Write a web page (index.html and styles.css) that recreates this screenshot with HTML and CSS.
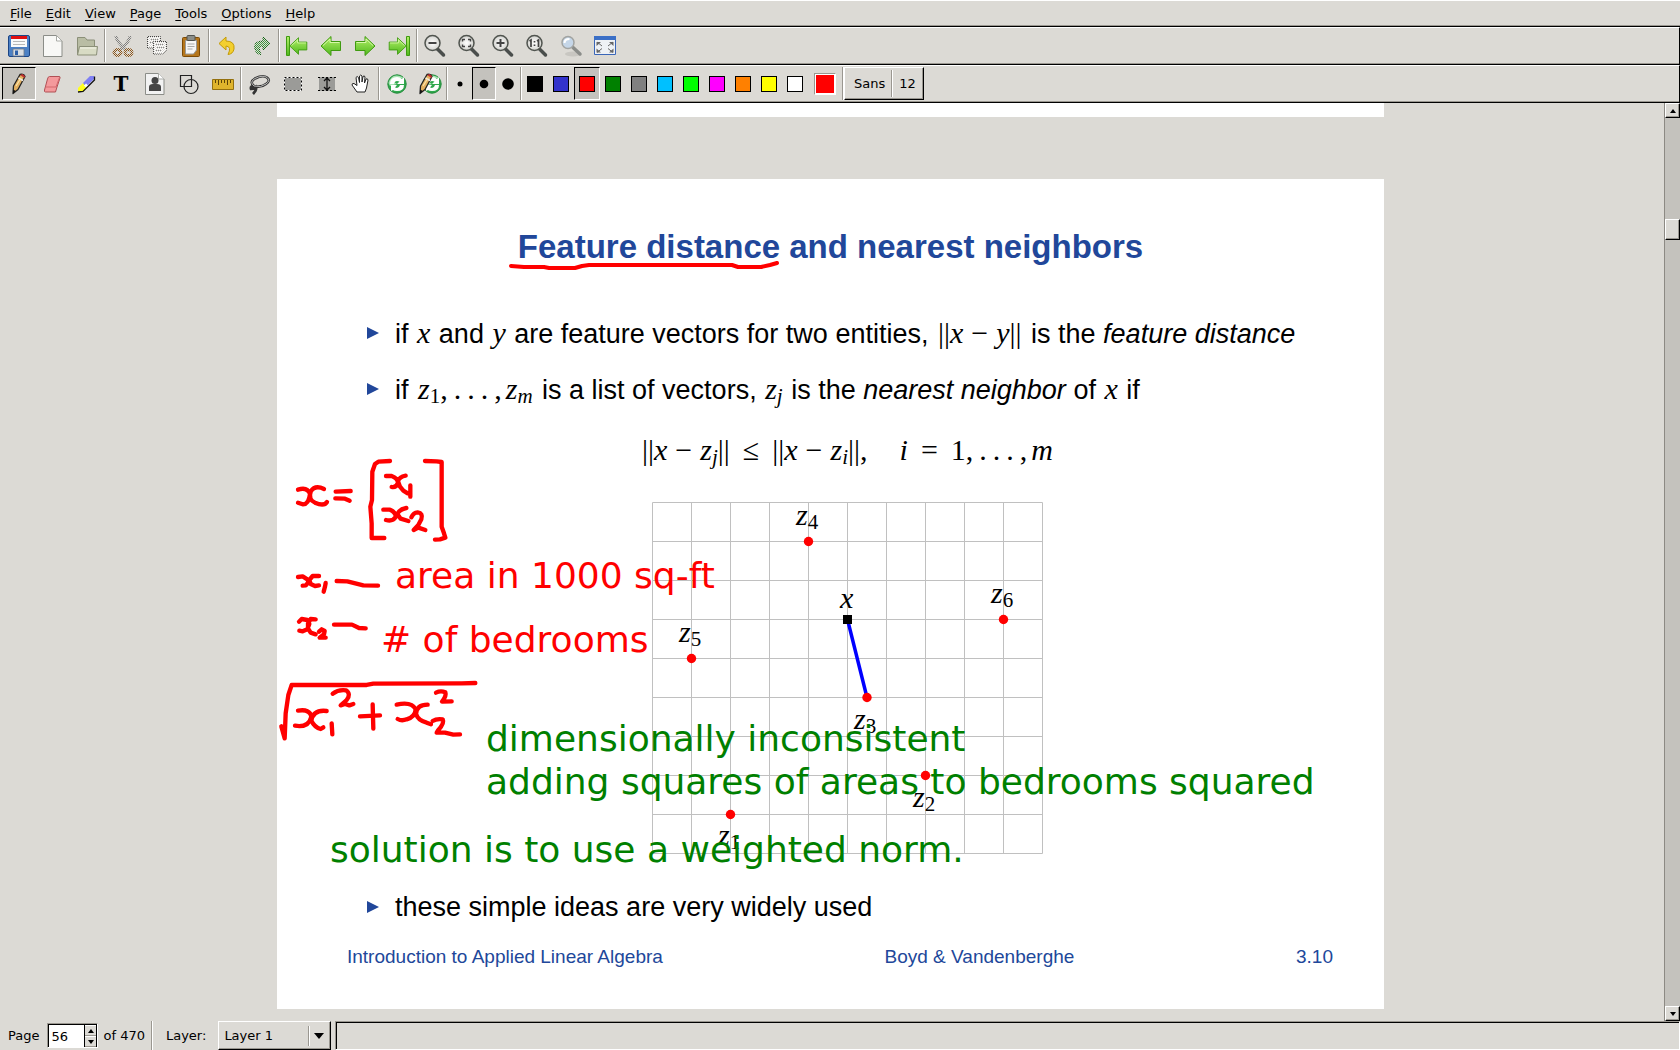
FILE: index.html
```
<!DOCTYPE html>
<html lang="en">

<head>
    <meta charset="utf-8">
    <title>Xournal</title>
    <link rel="stylesheet" href="styles.css">
</head>

<body>
    <!-- shared icon shapes -->
    <svg class="defs" aria-hidden="true">
        <defs>
            <linearGradient id="green" x1="0" y1="0" x2="0" y2="1">
                <stop offset="0" stop-color="#b4f06a"/>
                <stop offset="1" stop-color="#4fb81c"/>
            </linearGradient>
            <radialGradient id="lens">
                <stop offset="0" stop-color="#ffffff"/>
                <stop offset="1" stop-color="#d4d4d0"/>
            </radialGradient>
            <pattern id="dither" width="2" height="2" patternUnits="userSpaceOnUse">
                <path d="M0 0h1v1H0zM1 1h1v1H1z" fill="#dcdad5"/>
            </pattern>
        </defs>
        <symbol id="arrow" viewBox="0 0 24 24">
            <path d="M2 12 12 2.500v5h9.500v9H12v5z" fill="url(#green)" stroke="#3f9a10" stroke-linejoin="round"/>
            <path d="M4 11.500 11 5v3.500h9.500" fill="none" stroke="#d5f8a8"/>
        </symbol>
        <symbol id="glass" viewBox="0 0 24 24">
            <path d="m14.500 15 6 6" stroke="#4a4e4c" stroke-width="3.500" stroke-linecap="round"/>
            <circle cx="9.500" cy="9" r="7.500" fill="url(#lens)" stroke="#50544f" stroke-width="1.500"/>
        </symbol>
        <symbol id="pencil" viewBox="0 0 24 24">
            <path d="M6 21.500 6.500 14 13 2.500q4-1 5 2L11 17.500z" fill="#e3b060" stroke="#222" stroke-width="1.300" stroke-linejoin="round"/>
            <path d="m13 3 4.500 3 .5-2-2.500-2z" fill="#c03030"/>
            <path d="m11.500 6 4.500 2.500" stroke="#eee" stroke-width="1.500"/>
            <path d="m9 14 5-8" stroke="#fbe3a8" stroke-width="1.200"/>
            <path d="m6 21.500 .2-4 2.500 1.500z" fill="#111"/>
        </symbol>
        <symbol id="recycle" viewBox="0 0 24 24">
            <circle cx="12" cy="12" r="9.200" fill="#2fa84c" stroke="#258b3c"/>
            <path d="M3.500 11Q6 3 12 3.500 18 4 19 7q-8-3-10 3l3 2-7 2z" fill="#a9e4b4"/>
            <path d="M5 12q0-7 7-7 3 0 5 2l2-2v7h-7l2.500-2.500Q10 7.500 9 12zM19 13q0 6-7 6-3 0-4-1l-2 1v-6h6l-2 2.500q4 1.500 5-2.500z" fill="#fff"/>
        </symbol>
    </svg>

    <nav class="menubar">
        <a href="#"><u>F</u>ile</a>
        <a href="#"><u>E</u>dit</a>
        <a href="#"><u>V</u>iew</a>
        <a href="#"><u>P</u>age</a>
        <a href="#"><u>T</u>ools</a>
        <a href="#"><u>O</u>ptions</a>
        <a href="#"><u>H</u>elp</a>
    </nav>

    <div class="toolbar">
        <button class="tool" aria-label="Save"><svg viewBox="0 0 24 24">
            <rect x="1.500" y="1.500" width="21" height="21" rx="1.500" fill="#4c80c4" stroke="#1c4585"/>
            <path d="M4 2h16v11H4z" fill="#fafafa"/><path d="M4 2h16v3H4z" fill="#e01010"/>
            <path d="M6 7.500h12M6 10.500h12" stroke="#b8b8b8"/>
            <path d="M6 15h11v7H6z" fill="#d9dde2" stroke="#707a88" stroke-width=".8"/><path d="M8 16.500h3v4.500H8z" fill="#2c5fa8"/>
        </svg></button>
        <button class="tool" aria-label="New"><svg viewBox="0 0 24 24">
            <path d="M2.500 1.500h13l5.500 5.500v15.500H2.500z" fill="#f8f8f6" stroke="#8b8d88" stroke-linejoin="round"/>
            <path d="M15.500 1.500V7H21z" fill="#fff" stroke="#a9aba6"/>
        </svg></button>
        <button class="tool" aria-label="Open"><svg viewBox="0 0 24 24">
            <path d="M2.500 21V3.500H10L12 6h7.500v6" fill="#b9bda4" stroke="#8b8f78"/>
            <path d="M4.500 12.500h18l-1 8.500H2.500z" fill="#d8dbc4" stroke="#8b8f78"/>
            <path d="M5 14h16" stroke="#f4f5e8"/>
        </svg></button>
        <i class="sep"></i>
        <button class="tool" aria-label="Cut"><svg viewBox="0 0 24 24">
            <path d="M5 2q0 5 10 14M19 2q0 5-10 14" fill="none" stroke="#7e7e7e" stroke-width="3"/>
            <ellipse cx="6.500" cy="18.500" rx="3.500" ry="3" fill="none" stroke="#8a5318" stroke-width="3"/>
            <ellipse cx="17.500" cy="18.500" rx="3.500" ry="3" fill="none" stroke="#8a5318" stroke-width="3"/>
            <path d="M0 0h24v24H0z" fill="url(#dither)"/>
        </svg></button>
        <button class="tool" aria-label="Copy"><svg viewBox="0 0 24 24">
            <path d="M2.500 2.500h13V14h-13z" fill="#fff" stroke="#444"/>
            <path d="M8.500 7.500h13V16l-4 4h-9z" fill="#fff" stroke="#444"/>
            <path d="M5 5.500h8M5 8.500h3M11 10.500h8M11 13.500h8M11 16.500h5" stroke="#888"/>
            <path d="M0 0h24v24H0z" fill="url(#dither)"/>
        </svg></button>
        <button class="tool" aria-label="Paste"><svg viewBox="0 0 24 24">
            <rect x="3.500" y="3.500" width="17" height="19" rx="1" fill="#b5761c" stroke="#7c4a06"/>
            <path d="M6.500 6.500h11V16l-3 4h-8z" fill="#f6f6f6" stroke="#999"/>
            <path d="M8.500 10h7M8.500 12.500h7M8.500 15h5" stroke="#aaa"/>
            <rect x="8" y="1.500" width="8" height="5" rx="1" fill="#8b8d88" stroke="#50524e"/>
        </svg></button>
        <i class="sep"></i>
        <button class="tool" aria-label="Undo"><svg viewBox="0 0 24 24">
            <path d="M4 9.500 11 3v4q9 0 8 8-1 5-6 5.500 4-8-2-8.500v4z" fill="#f3cf2e" stroke="#c39a08" stroke-linejoin="round"/>
        </svg></button>
        <button class="tool" aria-label="Redo"><svg viewBox="0 0 24 24">
            <path d="M21 9.500 14 3v4Q4 7 6 15q1 5 6 5.500-4-8 2-8.500v4z" fill="#3f9a3f" stroke="#0d600d" stroke-linejoin="round"/>
            <path d="M0 0h24v24H0z" fill="url(#dither)"/>
        </svg></button>
        <i class="sep"></i>
        <button class="tool" aria-label="First page"><svg viewBox="0 0 24 24">
            <path d="M1.500 2.500h3v19h-3z" fill="url(#green)" stroke="#3f9a10"/>
            <use href="#arrow" x="3" y="0" width="21" height="24"/>
        </svg></button>
        <button class="tool" aria-label="Previous page"><svg viewBox="0 0 24 24"><use href="#arrow"/></svg></button>
        <button class="tool" aria-label="Next page"><svg class="flip" viewBox="0 0 24 24"><use href="#arrow"/></svg></button>
        <button class="tool" aria-label="Last page"><svg class="flip" viewBox="0 0 24 24">
            <path d="M1.500 2.500h3v19h-3z" fill="url(#green)" stroke="#3f9a10"/>
            <use href="#arrow" x="3" y="0" width="21" height="24"/>
        </svg></button>
        <i class="sep"></i>
        <button class="tool" aria-label="Zoom out"><svg viewBox="0 0 24 24"><use href="#glass"/><path d="M5.500 9h8" stroke="#444" stroke-width="2"/></svg></button>
        <button class="tool" aria-label="Page width"><svg viewBox="0 0 24 24"><use href="#glass"/><path d="M5.500 7.500V5.500H8M11 5.500h2.500v2M13.500 10.500v2H11M8 12.500H5.500v-2" fill="none" stroke="#444" stroke-width="1.400"/></svg></button>
        <button class="tool" aria-label="Zoom in"><svg viewBox="0 0 24 24"><use href="#glass"/><path d="M5.500 9h8M9.500 5v8" stroke="#444" stroke-width="2"/></svg></button>
        <button class="tool" aria-label="Normal size"><svg viewBox="0 0 24 24"><use href="#glass"/><path d="M4.500 7 6 6v7M12 7l1.500-1v7M9.500 7v1.500M9.500 10.500V12" fill="none" stroke="#444" stroke-width="1.700"/></svg></button>
        <button class="tool" aria-label="Set zoom"><svg viewBox="0 0 24 24">
            <ellipse cx="14" cy="20" rx="8" ry="2.500" fill="#c8c6c1"/>
            <path d="m14 13.500 7 6.500" stroke="#8b8d8a" stroke-width="3.500" stroke-linecap="round"/>
            <circle cx="9" cy="8.500" r="6" fill="#c5d6e8" stroke="#a2a4a2" stroke-width="1.500"/>
            <path d="M5.500 9q0-4 5-4" fill="none" stroke="#fff" stroke-width="2"/>
        </svg></button>
        <button class="tool" aria-label="Fullscreen"><svg viewBox="0 0 24 24">
            <path d="M1.500 2.500h21v18h-21z" fill="#eef1f5" stroke="#3a66b8"/><path d="M1 2h22v4H1z" fill="#3b6fc6"/>
            <path d="M3.500 8H8L3.500 12zM20.500 8H16l4.500 4zM3.500 18.500H8l-4.500-4zM20.500 18.500H16l4.500-4z" fill="#666"/>
            <path d="m4 8 5 4M20 8l-5 4M4 18.500l5-4M20 18.500l-5-4" stroke="#666"/>
        </svg></button>
    </div>

    <div class="toolbar">
        <button class="tool active" aria-label="Pen"><svg viewBox="0 0 24 24"><use href="#pencil"/></svg></button>
        <button class="tool" aria-label="Eraser"><svg viewBox="0 0 24 24">
            <path d="M8.500 4.500h9.500q1.500 0 1 1.500l-3 9-1.500 5H4.500q-1.500 0-1-2l3-11q.5-2.500 2-2.500z" fill="#f49a9c" stroke="#b05055"/>
            <path d="M4.500 15h10.500l3.500-9.500" fill="none" stroke="#d3686c"/>
        </svg></button>
        <button class="tool" aria-label="Highlighter"><svg viewBox="0 0 24 24">
            <path d="m3 16 5-5 5 4-5 5H3z" fill="#ffff20"/><path d="m8 11 7-7h4v3l-8 8z" fill="#8080f4"/>
            <path d="m10 12.500 2 2" stroke="#fff" stroke-width="3"/>
            <path d="m3 20 5-.5L19.500 8V4.500" fill="none" stroke="#111" stroke-width="1.300"/>
        </svg></button>
        <button class="tool" aria-label="Text"><span class="letter">T</span></button>
        <button class="tool" aria-label="Image"><svg viewBox="0 0 24 24">
            <path d="M2.500 1.500h13l5.500 5.500v15.500H2.500z" fill="#f2f2f2" stroke="#8b8d88" stroke-linejoin="round"/>
            <path d="M15.500 1.500V7H21" fill="#fff" stroke="#a9aba6"/>
            <circle cx="12" cy="8.500" r="3.500" fill="#444"/><path d="M6 19v-4q0-3 4-3h4q4 0 4 3v4z" fill="#444"/>
        </svg></button>
        <button class="tool" aria-label="Shape recognizer"><svg viewBox="0 0 24 24" fill="none" stroke="#222" stroke-width="1.200">
            <path d="M3.500 3.500h11v11h-11z"/><circle cx="14" cy="14.500" r="7"/>
        </svg></button>
        <button class="tool" aria-label="Ruler"><svg viewBox="0 0 24 24">
            <path d="M1.500 7.500h21v10h-21z" fill="#dfb42c" stroke="#94700e"/>
            <path d="M4.500 8v3M7.500 8v5M10.500 8v3M13.500 8v3M16.500 8v5M19.500 8v3" stroke="#5c4408"/>
        </svg></button>
        <i class="sep"></i>
        <button class="tool" aria-label="Select region"><svg viewBox="0 0 24 24" fill="none">
            <path d="M7 14Q2 10 8 6.500q8-4 12-1t-1 6.500Q14 16 7 14q-4 0-3 3 3 0 5-2 1 3-3 7" stroke="#333" stroke-width="2.600"/>
            <path d="M7 14Q2 10 8 6.500q8-4 12-1t-1 6.500Q14 16 7 14" stroke="#bbb"/>
        </svg></button>
        <button class="tool" aria-label="Select rectangle"><svg viewBox="0 0 24 24">
            <path d="M3.500 5.500h17v13h-17z" fill="#9b9b98" stroke="#fff"/><path d="M3.500 5.500h17v13h-17z" fill="none" stroke="#000" stroke-dasharray="2 2"/>
        </svg></button>
        <button class="tool" aria-label="Vertical space"><svg viewBox="0 0 24 24">
            <path d="M4 5h16v14H4z" fill="#9b9b98"/><path d="M3 5.500h18M3 18.500h18" stroke="#000" stroke-dasharray="2 2"/>
            <path d="M12 6v12M9 9l3-3 3 3M9 15l3 3 3-3" fill="none" stroke="#111" stroke-width="1.300"/>
        </svg></button>
        <button class="tool" aria-label="Hand"><svg viewBox="0 0 24 24">
            <path d="m8 20-5-7q0-2 2-1.500l3 2-1-8q1-2 2.500 0l1 5V4q1.200-2 2.500 0v6l1-5.500q1.500-1.500 2 .5L15.500 11l1.500-4q1.500-1 2 1l-1.500 8-1.500 4z" fill="#fff" stroke="#222" stroke-linejoin="round"/>
        </svg></button>
        <i class="sep"></i>
        <button class="tool preset" aria-label="Default tool"><svg viewBox="0 0 24 24"><use href="#recycle"/></svg></button>
        <button class="tool preset" aria-label="Default pen"><svg viewBox="0 0 24 24"><use href="#recycle" x="2"/><use href="#pencil" x="-4"/></svg></button>
        <i class="sep"></i>
        <button class="tool dot" aria-label="Fine"><svg viewBox="0 0 24 24"><circle cx="12" cy="12" r="2.500"/></svg></button>
        <button class="tool dot active" aria-label="Medium"><svg viewBox="0 0 24 24"><circle cx="12" cy="12" r="4.300"/></svg></button>
        <button class="tool dot" aria-label="Thick"><svg viewBox="0 0 24 24"><circle cx="12" cy="12" r="5.800"/></svg></button>
        <i class="sep"></i>
        <button class="tool color" aria-label="Black"><i class="swatch black"></i></button>
        <button class="tool color" aria-label="Blue"><i class="swatch blue"></i></button>
        <button class="tool color active" aria-label="Red"><i class="swatch red"></i></button>
        <button class="tool color" aria-label="Green"><i class="swatch green"></i></button>
        <button class="tool color" aria-label="Gray"><i class="swatch gray"></i></button>
        <button class="tool color" aria-label="Light blue"><i class="swatch lightblue"></i></button>
        <button class="tool color" aria-label="Light green"><i class="swatch lightgreen"></i></button>
        <button class="tool color" aria-label="Magenta"><i class="swatch magenta"></i></button>
        <button class="tool color" aria-label="Orange"><i class="swatch orange"></i></button>
        <button class="tool color" aria-label="Yellow"><i class="swatch yellow"></i></button>
        <button class="tool color" aria-label="White"><i class="swatch white"></i></button>
        <button class="tool" aria-label="Pick color"><i class="picker"></i></button>
        <i class="sep"></i>
        <button class="font-button"><span>Sans</span><i class="sep"></i><span>12</span></button>
    </div>

    <main class="workspace">
        <div class="canvas">
            <div class="previous-page"></div>
            <article class="slide">
                <h1>Feature distance and nearest neighbors</h1>
                <div class="content">
                    <ul>
                        <li>if <var>x</var> and <var>y</var> are feature vectors for two entities, <span class="math">||<var>x</var><span class="op">−</span><var>y</var>||</span> is the <em>feature distance</em></li>
                        <li>if <span class="math"><var>z</var><sub>1</sub>,<span class="dots">...</span>,<var>z<sub>m</sub></var></span> is a list of vectors, <var>z<sub>j</sub></var> is the <em>nearest neighbor</em> of <var>x</var> if</li>
                    </ul>
                    <p class="formula math">||<var>x</var><span class="op">−</span><var>z<sub>j</sub></var>||<span class="rel">≤</span>||<var>x</var><span class="op">−</span><var>z<sub>i</sub></var>||,<span class="quad"></span><var>i</var><span class="rel">=</span>1,<span class="dots">...</span>,<var>m</var></p>
                    <svg class="plot" viewBox="0 0 391 352" width="391" height="352">
                        <path class="grid" d="M.5 .5v351M39.500 .5v351M78.500 .5v351M117.500 .5v351M156.500 .5v351M195.500 .5v351M234.500 .5v351M273.500 .5v351M312.500 .5v351M351.500 .5v351M390.500 .5v351M.5 .5h390M.5 39.500h390M.5 78.500h390M.5 117.500h390M.5 156.500h390M.5 195.500h390M.5 234.500h390M.5 273.500h390M.5 312.500h390M.5 351.500h390"/>
                        <path d="M195.500 117.500 215 195.500" stroke="#00f" stroke-width="3.500"/>
                        <rect x="191" y="113" width="9" height="9"/>
                        <g fill="#f00">
                            <circle cx="78.500" cy="312.500" r="4.700"/>
                            <circle cx="273.500" cy="273.500" r="4.700"/>
                            <circle cx="215" cy="195.500" r="4.700"/>
                            <circle cx="156.500" cy="39.500" r="4.700"/>
                            <circle cx="39.500" cy="156.500" r="4.700"/>
                            <circle cx="351.500" cy="117.500" r="4.700"/>
                        </g>
                        <text x="188" y="106">x</text>
                        <text x="66" y="343">z<tspan class="index" dy="4">1</tspan></text>
                        <text x="261" y="305">z<tspan class="index" dy="4">2</tspan></text>
                        <text x="202" y="227">z<tspan class="index" dy="4">3</tspan></text>
                        <text x="144" y="23">z<tspan class="index" dy="4">4</tspan></text>
                        <text x="27" y="140">z<tspan class="index" dy="4">5</tspan></text>
                        <text x="339" y="101">z<tspan class="index" dy="4">6</tspan></text>
                    </svg>
                    <ul>
                        <li>these simple ideas are very widely used</li>
                    </ul>
                </div>
                <footer>
                    <span>Introduction to Applied Linear Algebra</span>
                    <span>Boyd &amp; Vandenberghe</span>
                    <span>3.10</span>
                </footer>

                <!-- annotation layer -->
                <svg class="ink" viewBox="0 0 1107 830" width="1107" height="830">
                    <path d="M234 87 247 88H267L272 89H298L305 87 312 86H455L461 88H484L493 86 500 84"/>
                    <!-- pen strokes are stored at three times the page scale -->
                    <g transform="translate(-7 261) scale(.33333)">
                        <path d="M84 149Q112 140 120 162 116 194 98 193L84 188M162 147Q135 134 122 155 114 178 135 188 162 200 171 186"/>
                        <path d="M197 155 242 153M196 175 225 176 239 182"/>
                        <path d="M360 63 325 65 315 72 307 95 306 180 301 200 305 250V294H343"/>
                        <path d="M348 108H365Q382 114 384 128 378 144 365 141M407 107Q388 110 384 124L390 140 400 152 413 160M421 136V170"/>
                        <path d="M340 209H360Q376 216 378 230 368 246 348 240M409 204Q388 208 382 222L392 236 415 243"/>
                        <path d="M424 232Q430 218 443 217 460 219 454 238L445 255 431 270 445 263 466 270"/>
                        <path d="M465 63 500 64 515 66V260L522 280 526 293 510 298 495 299"/>
                        <path d="M84 411 98 409 112 418 116 425 108 436 98 437M147 408H128L118 420 122 432 135 438 147 436M167 429 165 440 161 455"/>
                        <path d="M200 423 232 424 280 436 324 437"/>
                        <path d="M87 545 95 537 112 540 118 552 112 568 98 574 88 572M137 538 122 537 114 550V565L122 578 137 583M147 575 155 568 164 573 162 583 149 593 167 593"/>
                        <path d="M192 554H246L267 564 287 565"/>
                        <path d="M34 859 44 895 47 820 55 765 65 735H290L310 731 575 730 616 729"/>
                        <path d="M84 812Q120 806 124 830 116 864 75 857M170 813Q130 808 124 842 134 862 152 867L160 862M185 850 187 883"/>
                        <path d="M188 761Q205 748 228 751 244 762 230 780L212 796 225 792 238 796 250 792"/>
                        <path d="M308 793 310 866M270 829 330 826"/>
                        <path d="M380 794Q425 784 437 808 436 830 410 838 395 844 383 837M473 794Q440 794 438 822 444 842 470 848L483 853"/>
                        <path d="M488 843Q500 835 518 838 524 850 505 870L500 878 525 878 550 884 570 883"/>
                        <path d="M498 758Q512 751 526 757 530 768 516 785L545 784"/>
                    </g>
                </svg>
                <p class="note red-ink area">area in 1000 sq-ft</p>
                <p class="note red-ink bedrooms"># of bedrooms</p>
                <p class="note green-ink units">dimensionally inconsistent<br>adding squares of areas to bedrooms squared</p>
                <p class="note green-ink solution">solution is to use a weighted norm.</p>
            </article>
        </div>
        <div class="scrollbar">
            <button class="raised" aria-label="Scroll up"><i class="triangle up"></i></button>
            <div class="trough"><div class="thumb raised"></div></div>
            <button class="raised" aria-label="Scroll down"><i class="triangle down"></i></button>
        </div>
    </main>

    <div class="statusbar">
        <label for="page">Page</label>
        <div class="spin">
            <input type="text" id="page" value="56">
            <div class="steps">
                <button aria-label="Next"><i class="triangle up"></i></button>
                <button aria-label="Previous"><i class="triangle down"></i></button>
            </div>
        </div>
        <span>of 470</span>
        <i class="sep"></i>
        <label for="layer">Layer:</label>
        <div class="combo">
            <select id="layer">
                <option>Layer 1</option>
            </select>
            <i class="sep"></i>
            <i class="triangle large"></i>
        </div>
        <div class="status"></div>
    </div>
</body>

</html>
```
FILE: styles.css
```
* {
    box-sizing: border-box;
}

body {
    margin: 0;
    height: 100vh;
    display: flex;
    flex-direction: column;
    overflow: hidden;
    background-color: #dcdad5;
    color: #000;
    font-family: "DejaVu Sans", sans-serif;
    font-size: 13px;
}

button {
    padding: 0;
    border: none;
    background: none;
    color: inherit;
    font: inherit;
}

.defs {
    position: absolute;
    width: 0;
    height: 0;
}

/* menu and toolbars */

.menubar {
    display: flex;
    flex: none;
    align-items: center;
    height: 27px;
    padding: 0 3px;
    border-top: 1px solid #fff;
    border-bottom: 1px solid #000;
    box-shadow: inset 0 -1px #9a9790;
}

.menubar a {
    padding: 0 7px;
    color: #000;
    text-decoration: none;
}

.menubar u {
    text-underline-offset: 2px;
}

.toolbar {
    display: flex;
    flex: none;
    height: 38px;
    padding: 1px 2px 2px;
    border-top: 1px solid #fff;
    border-bottom: 1px solid #000;
    border-right: 1px solid #000;
    box-shadow: inset 0 -1px #9a9790;
}

.tool {
    display: flex;
    flex: none;
    align-items: center;
    justify-content: center;
    width: 34px;
    border: 1px solid transparent;
}

.tool svg {
    flex: none;
    width: 24px;
    height: 24px;
}

.tool.active {
    background-color: #c4c2bd;
    border-color: #000 #fff #fff #000;
}

.flip {
    transform: scaleX(-1);
}

.letter {
    font-family: "DejaVu Serif", serif;
    font-size: 20px;
    font-weight: bold;
    line-height: 24px;
}

.sep {
    flex: none;
    width: 2px;
    border-left: 1px solid #9a9790;
    border-right: 1px solid #fff;
}

.preset {
    width: 33px;
}

.dot {
    width: 24px;
}

.color {
    width: 26px;
}

.swatch {
    width: 16px;
    height: 16px;
    border: 1px solid #000;
}

.black { background-color: #000; }
.blue { background-color: #3333cc; }
.red { background-color: #f00; }
.green { background-color: #008000; }
.gray { background-color: #808080; }
.lightblue { background-color: #00c0ff; }
.lightgreen { background-color: #0f0; }
.magenta { background-color: #f0f; }
.orange { background-color: #ff8000; }
.yellow { background-color: #ff0; }
.white { background-color: #fff; }

.picker {
    width: 22px;
    height: 22px;
    border: 1px solid;
    border-color: #9a9790 #fff #fff #9a9790;
    box-shadow: inset 0 0 0 1px #fff;
    background-color: #f00;
}

.font-button {
    display: flex;
    align-items: center;
    gap: 6px;
    padding: 2px 7px 2px 9px;
    border: 1px solid;
    border-color: #fff #000 #000 #fff;
    box-shadow: inset -1px -1px #9a9790;
}

.font-button .sep {
    align-self: stretch;
}

/* document area */

.workspace {
    display: flex;
    flex: 1;
    min-height: 0;
}

.canvas {
    flex: 1;
    display: flex;
    flex-direction: column;
    align-items: center;
    gap: 62px;
    overflow: hidden;
    padding-right: 3px;
}

.previous-page {
    flex: none;
    width: 100%;
    max-width: 1107px;
    height: 14px;
    background-color: #fff;
}

.slide {
    position: relative;
    flex: none;
    width: 100%;
    max-width: 1107px;
    padding: 48px 0 40px;
    background-color: #fff;
    font-family: "Liberation Sans", sans-serif;
    font-size: 27px;
    line-height: 40px;
}

.slide h1 {
    margin: 0 0 46px;
    color: #21479a;
    font-size: 33px;
    text-align: center;
}

.content {
    padding: 0 84px 0 118px;
}

.slide ul {
    display: flex;
    flex-direction: column;
    gap: 15px;
    margin: 0;
    padding: 0;
    list-style: none;
    white-space: nowrap;
}

.slide li::before {
    content: "";
    float: left;
    margin: 14px 0 0 -28px;
    border-left: 12px solid #21479a;
    border-top: 6px solid transparent;
    border-bottom: 6px solid transparent;
}

.slide var,
.math {
    font-family: "Liberation Serif", serif;
    font-size: 30px;
}

.slide li > var {
    margin: 0 1px;
}

.slide li > .math {
    margin: 0 2px;
}

.slide sub {
    font-size: 21px;
    line-height: 0;
    vertical-align: -4px;
}

.op {
    margin: 0 8px;
}

.rel {
    margin: 0 13px;
}

.dots {
    margin-left: 6px;
    letter-spacing: 6px;
}

.dots + var {
    margin-left: 4px;
}

.quad {
    margin-left: 32px;
}

.formula {
    margin: 20px 0 32px;
    text-align: center;
    white-space: nowrap;
}

.plot {
    display: block;
    margin: 0 auto 33px;
    overflow: visible;
    font-family: "Liberation Serif", serif;
    font-size: 30px;
    font-style: italic;
}

.plot .index {
    font-size: 21px;
    font-style: normal;
}

.grid {
    fill: none;
    stroke: #c0c0c0;
}

.slide footer {
    display: flex;
    justify-content: space-between;
    margin-top: 18px;
    padding: 0 51px 0 70px;
    color: #21479a;
    font-size: 19px;
    line-height: 24px;
}

.ink {
    position: absolute;
    left: 0;
    top: 0;
    fill: none;
    stroke: #f00;
    stroke-width: 4px;
    stroke-linecap: round;
    stroke-linejoin: round;
}

.ink g {
    stroke-width: 13px;
}

.note {
    position: absolute;
    margin: 0;
    font-family: "DejaVu Sans", sans-serif;
    font-size: 36px;
    line-height: 43px;
    white-space: nowrap;
}

.red-ink { color: #f00; }
.green-ink { color: #008000; }

.area { left: 118px; top: 375px; }
.bedrooms { left: 104px; top: 439px; }
.units { left: 209px; top: 538px; }
.solution { left: 53px; top: 649px; }

/* scrollbar */

.scrollbar {
    display: flex;
    flex-direction: column;
    flex: none;
    width: 16px;
    border-left: 1px solid #8c8983;
    background-color: #c4c2bd;
}

.raised {
    background-color: #dcdad5;
    border: 1px solid;
    border-color: #fff #000 #000 #fff;
    box-shadow: inset -1px -1px #9a9790;
}

.scrollbar button {
    display: flex;
    align-items: center;
    justify-content: center;
    height: 15px;
}

.trough {
    flex: 1;
}

.thumb {
    height: 21px;
    margin-top: 101px;
}

.triangle {
    border: 3px solid transparent;
}

.up {
    border-top: none;
    border-bottom: 4px solid #000;
}

.down {
    border-bottom: none;
    border-top: 4px solid #000;
}

.large {
    border-width: 6px 5px 0;
    border-top-color: #000;
}

/* status bar */

.statusbar {
    display: flex;
    flex: none;
    align-items: center;
    height: 29px;
    padding-left: 8px;
}

.spin {
    display: flex;
    width: 51px;
    height: 25px;
    margin: 0 5px 0 8px;
    border: 1px solid;
    border-color: #9a9790 #fff #fff #9a9790;
    box-shadow: inset 1px 1px #000;
}

.spin input {
    flex: 1;
    min-width: 0;
    margin: 1px 0 0 1px;
    padding: 0 2px;
    border: none;
    background-color: #fff;
    font: inherit;
}

.steps {
    display: flex;
    flex-direction: column;
    width: 13px;
    margin-top: 1px;
    border-left: 1px solid #000;
    border-right: 1px solid #000;
}

.steps button {
    display: flex;
    flex: 1;
    align-items: center;
    justify-content: center;
    border-top: 1px solid #fff;
    border-bottom: 1px solid #9a9790;
}

.statusbar > .sep {
    align-self: stretch;
    margin: 0 13px 0 6px;
}

.combo {
    display: flex;
    align-items: center;
    align-self: stretch;
    width: 113px;
    margin: 0 4px 0 12px;
    padding-right: 6px;
    border: 1px solid;
    border-color: #fff #000 #000 #fff;
    box-shadow: inset -1px -1px #9a9790;
}

.combo select {
    flex: 1;
    padding: 0 0 0 5px;
    border: none;
    appearance: none;
    background: none;
    color: #000;
    font: inherit;
}

.combo .sep {
    height: 20px;
    margin-right: 4px;
}

.status {
    flex: 1;
    align-self: stretch;
    border: 1px solid;
    border-color: #9a9790 #fff #fff #9a9790;
    box-shadow: inset 1px 1px #000;
}
```
